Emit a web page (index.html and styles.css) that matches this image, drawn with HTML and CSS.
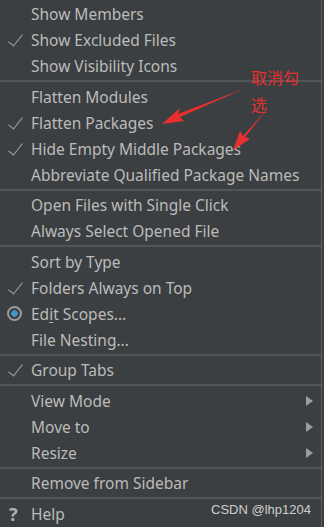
FILE: index.html
```html
<!DOCTYPE html>
<html lang="en">
<head>
    <meta charset="UTF-8">
    <meta name="viewport" content="width=device-width, initial-scale=1.0">
    <title>Project View Options</title>
    <link rel="stylesheet" href="styles.css">
</head>
<body>
    <div class="menu">
        <div class="item">Show Members</div>
        <div class="item checked">Show Excluded Files</div>
        <div class="item">Show Visibility Icons</div>
        <div class="sep"></div>
        <div class="item">Flatten Modules</div>
        <div class="item checked">Flatten Packages</div>
        <div class="item checked">Hide Empty Middle Packages</div>
        <div class="item">Abbreviate Qualified Package Names</div>
        <div class="sep"></div>
        <div class="item">Open Files with Single Click</div>
        <div class="item">Always Select Opened File</div>
        <div class="sep"></div>
        <div class="item">Sort by Type</div>
        <div class="item checked">Folders Always on Top</div>
        <div class="item radio">Ed<u>i</u>t Scopes...</div>
        <div class="item">File Nesting...</div>
        <div class="sep"></div>
        <div class="item checked">Group Tabs</div>
        <div class="sep"></div>
        <div class="item sub">View Mode</div>
        <div class="item sub">Move to</div>
        <div class="item sub">Resize</div>
        <div class="sep"></div>
        <div class="item">Remove from Sidebar</div>
        <div class="sep"></div>
        <div class="item help">Help</div>

        <!-- red annotation drawn over the menu -->
        <div class="note">取消勾<br>选</div>
        <svg class="arrows" width="324" height="527" viewBox="0 0 324 527">
            <path d="M246 88 L178 114 L180 108 L162 124 L184 121 L180 117 Z" fill="#e8302f"/>
            <path d="M268 108 L243 136 L240 131 L233 150 L250 139 L245 137 Z" fill="#e8302f"/>
        </svg>
        <div class="mark">CSDN @lhp1204</div>
    </div>
</body>
</html>
```

FILE: styles.css
```css
html, body {
    margin: 0;
    padding: 0;
    background-color: #3c3f41;
}
.menu {
    position: relative;
    width: 322px;
    height: 527px;
    padding-top: 1px;
    box-sizing: border-box;
    background-color: #3c3f41;
    border-right: 1px solid #5e6164;
    font-family: "Noto Sans", "Open Sans", sans-serif;
    font-size: 15.5px;
    color: #bbbbbb;
}
.item {
    position: relative;
    height: 26px;
    line-height: 26px;
    padding-left: 31px;
    white-space: nowrap;
}
.item u {
    text-decoration-thickness: 1px;
    text-underline-offset: 2px;
}
.checked::before {
    content: "";
    position: absolute;
    left: 12px;
    top: 4px;
    width: 6px;
    height: 14px;
    border-right: 1.5px solid #a9a9a9;
    border-bottom: 1.5px solid #a9a9a9;
    transform: rotate(38deg);
}
.radio::before {
    content: "";
    position: absolute;
    left: 7px;
    top: 5px;
    width: 11px;
    height: 11px;
    border: 2px solid #9a9da0;
    border-radius: 50%;
    background: radial-gradient(circle, #3f95c4 0 3px, transparent 3.5px);
}
.help::before {
    content: "?";
    position: absolute;
    left: 9px;
    top: 0;
    font-weight: bold;
    font-size: 18px;
    color: #b0b0b0;
}
.sub::after {
    content: "";
    position: absolute;
    right: 8px;
    top: 8px;
    border-left: 7px solid #9d9d9d;
    border-top: 5px solid transparent;
    border-bottom: 5px solid transparent;
}
.sep {
    height: 2px;
    margin: 1px 0 1.5px;
    background-color: #515558;
}
.note {
    position: absolute;
    left: 251px;
    top: 64px;
    font-family: "Noto Sans CJK SC", sans-serif;
    font-size: 16px;
    line-height: 27px;
    color: #e8302f;
}
.arrows {
    position: absolute;
    left: 0;
    top: 0;
}
.mark {
    position: absolute;
    left: 211px;
    top: 502px;
    font-family: "Liberation Sans", Arial, sans-serif;
    font-size: 13px;
    color: #cfcfcf;
}
```
